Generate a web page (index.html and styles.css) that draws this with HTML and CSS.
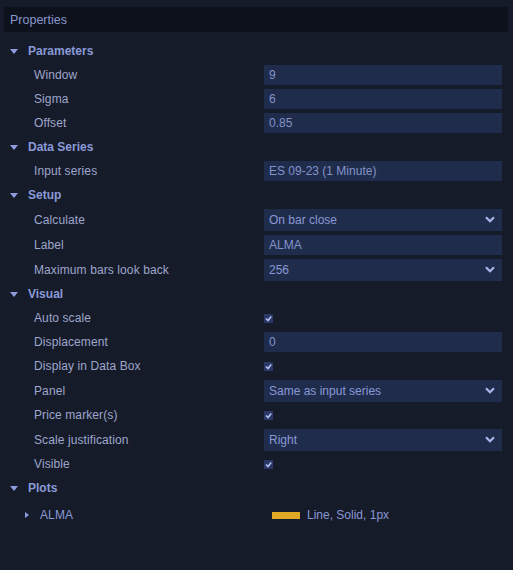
FILE: index.html
```html
<!DOCTYPE html>
<html>
<head>
<meta charset="utf-8">
<link rel="stylesheet" href="styles.css">
</head>
<body>
<div class="panel">
  <div class="header">Properties</div>
  <div class="tree">
    <div class="section"><span class="tri-down"></span><span class="sec-title">Parameters</span></div>
    <div class="row"><span class="label">Window</span><span class="field">9</span></div>
    <div class="row"><span class="label">Sigma</span><span class="field">6</span></div>
    <div class="row"><span class="label">Offset</span><span class="field">0.85</span></div>

    <div class="section"><span class="tri-down"></span><span class="sec-title">Data Series</span></div>
    <div class="row"><span class="label">Input series</span><span class="field">ES 09-23 (1 Minute)</span></div>

    <div class="section"><span class="tri-down"></span><span class="sec-title">Setup</span></div>
    <div class="row tall"><span class="label">Calculate</span><span class="field select">On bar close<svg class="chev" viewBox="0 0 10 7"><path d="M1 1.2 L5 5.2 L9 1.2" /></svg></span></div>
    <div class="row tall"><span class="label">Label</span><span class="field">ALMA</span></div>
    <div class="row tall"><span class="label">Maximum bars look back</span><span class="field select">256<svg class="chev" viewBox="0 0 10 7"><path d="M1 1.2 L5 5.2 L9 1.2" /></svg></span></div>

    <div class="section"><span class="tri-down"></span><span class="sec-title">Visual</span></div>
    <div class="row"><span class="label">Auto scale</span><span class="check"><svg viewBox="0 0 9 9"><path d="M2 4.5 L4 6.5 L7.2 2.6" /></svg></span></div>
    <div class="row"><span class="label">Displacement</span><span class="field">0</span></div>
    <div class="row"><span class="label">Display in Data Box</span><span class="check"><svg viewBox="0 0 9 9"><path d="M2 4.5 L4 6.5 L7.2 2.6" /></svg></span></div>
    <div class="row tall"><span class="label">Panel</span><span class="field select">Same as input series<svg class="chev" viewBox="0 0 10 7"><path d="M1 1.2 L5 5.2 L9 1.2" /></svg></span></div>
    <div class="row"><span class="label">Price marker(s)</span><span class="check"><svg viewBox="0 0 9 9"><path d="M2 4.5 L4 6.5 L7.2 2.6" /></svg></span></div>
    <div class="row tall"><span class="label">Scale justification</span><span class="field select">Right<svg class="chev" viewBox="0 0 10 7"><path d="M1 1.2 L5 5.2 L9 1.2" /></svg></span></div>
    <div class="row"><span class="label">Visible</span><span class="check"><svg viewBox="0 0 9 9"><path d="M2 4.5 L4 6.5 L7.2 2.6" /></svg></span></div>

    <div class="section"><span class="tri-down"></span><span class="sec-title">Plots</span></div>
    <div class="row plot"><span class="label sub"><span class="tri-right"></span>ALMA</span><span class="plot-val"><span class="swatch"></span>Line, Solid, 1px</span></div>
  </div>
</div>
</body>
</html>
```
FILE: styles.css
```css
html, body {
  margin: 0;
  padding: 0;
  background: #161b29;
  width: 513px;
  height: 570px;
  overflow: hidden;
  font-family: "Liberation Sans", Arial, sans-serif;
  font-size: 12px;
}
.panel {
  padding-top: 7px;
}
.header {
  margin: 0 5px 0 4px;
  height: 25px;
  line-height: 26px;
  padding-left: 6px;
  background: #0d111c;
  color: #8a97cc;
  font-size: 12.5px;
}
.tree {
  padding-top: 7px;
}
.section {
  height: 24px;
  display: flex;
  align-items: center;
  padding-left: 10px;
}
.tri-down {
  width: 0;
  height: 0;
  border-left: 4px solid transparent;
  border-right: 4px solid transparent;
  border-top: 5px solid #8d9cdc;
  margin-right: 10px;
}
.sec-title {
  color: #8a9ad8;
  font-weight: bold;
}
.row {
  height: 24px;
  display: grid;
  grid-template-columns: 264px 238px;
  align-items: center;
}
.row.tall {
  height: 25px;
}
.label {
  padding-left: 34px;
  color: #9ea6cc;
  letter-spacing: 0.1px;
}
.field {
  height: 20px;
  line-height: 20px;
  padding: 0 5px;
  background: #202c4b;
  color: #8393cc;
  display: flex;
  align-items: center;
  justify-content: space-between;
}
.field.select {
  height: 22px;
  line-height: 22px;
  color: #8a99d6;
}
.chev {
  width: 10px;
  height: 7px;
  margin-right: 2px;
}
.chev path {
  fill: none;
  stroke: #aab6ea;
  stroke-width: 2.2;
}
.check {
  width: 9px;
  height: 9px;
  background: #2b3866;
  display: block;
}
.check svg {
  width: 9px;
  height: 9px;
  display: block;
}
.check path {
  fill: none;
  stroke: #b4c0f0;
  stroke-width: 1.6;
}
.row.plot {
  height: 30px;
}
.label.sub {
  padding-left: 25px;
  display: flex;
  align-items: center;
  color: #8a99d6;
}
.tri-right {
  width: 0;
  height: 0;
  border-top: 3.5px solid transparent;
  border-bottom: 3.5px solid transparent;
  border-left: 4px solid #8d9cdc;
  margin-right: 11px;
}
.plot-val {
  display: flex;
  align-items: center;
  padding-left: 8px;
  color: #8a99d6;
}
.swatch {
  width: 28px;
  height: 7px;
  background: #e2a926;
  margin-right: 7px;
}
```
